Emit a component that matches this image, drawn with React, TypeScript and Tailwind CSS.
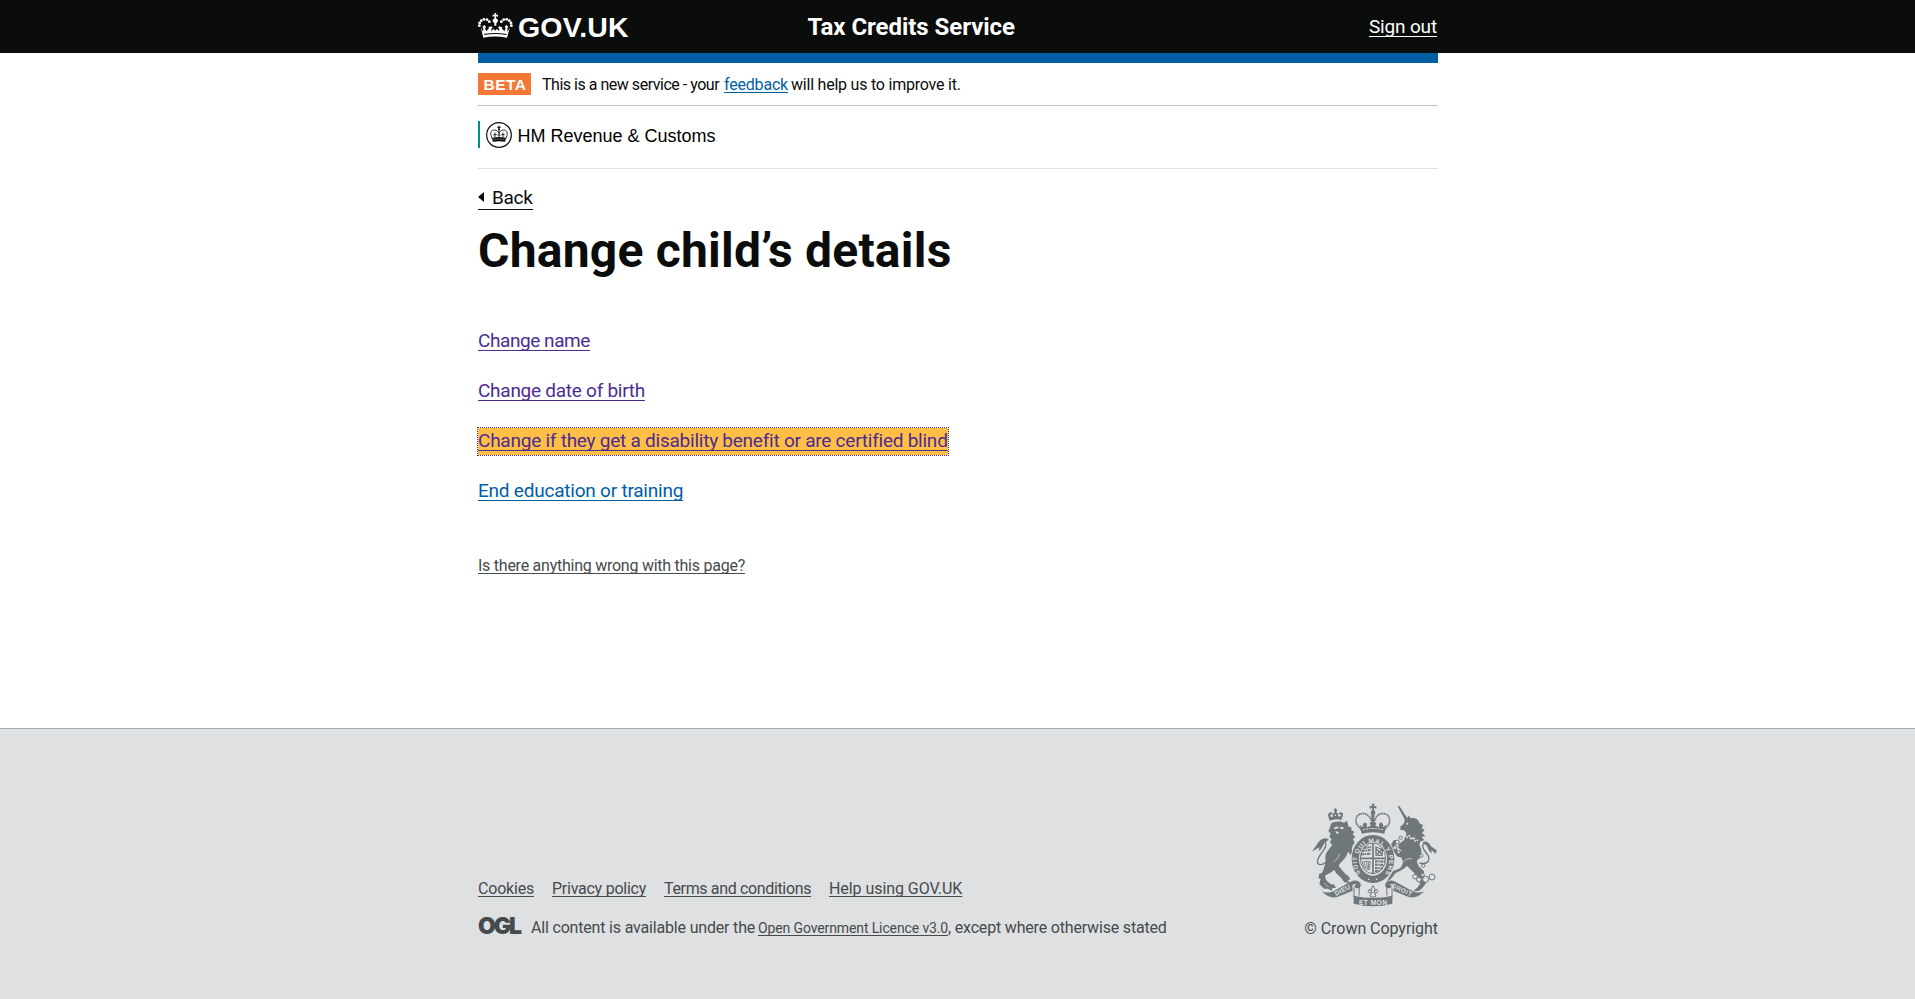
import type { ReactNode } from 'react';

function CrownLogo() {
  const beads: [number, number][] = [
    [28, 76], [29, 68], [34, 61], [42, 57], [51, 58], [58, 64],
    [94, 64], [101, 58], [110, 57], [118, 61], [123, 68], [124, 76],
  ];
  return (
    <svg viewBox="24 38 105 78" className="h-[26px] w-[35px]" fill="#fff" aria-hidden="true">
      {beads.map(([x, y]) => (
        <circle key={`${x}-${y}`} cx={x} cy={y} r="4.3" />
      ))}
      <path d="M73 38h6l-1 6 6-1.500v7l-6-1.500 1 7c4 1 6 4 5 8l-5 6v7h-6v-7l-5-6c-1-4 1-7 5-8l1-7-6 1.500v-7l6 1.500z" />
      <path d="M32 80l7 14 1-10-3-5 6-5 5 5-3 5 4 9 8-9-2-5 6 1 2-4 5 6-4 4 1 9h22l1-9-4-4 5-6 2 4 6-1-2 5 8 9 4-9-3-5 5-5 6 5-3 5 1 10 7-14-9 32c-23-5-49-5-71 0z" />
      <path d="M42 101q34-6 68 0l-1 3q-33-6-66 0z" fill="#0b0c0c" />
      <path d="M64 93l7-8 5 6 5-6 7 8-1 5H65z" />
      <circle cx="68" cy="86" r="2" fill="#0b0c0c" />
      <circle cx="84" cy="86" r="2" fill="#0b0c0c" />
    </svg>
  );
}

function RevenueCrest() {
  return (
    <svg viewBox="48 66 78 78" className="size-[26px]" fill="none" stroke="#0b0c0c" aria-hidden="true">
      <circle cx="87" cy="105" r="37" strokeWidth="3.500" />
      <path d="M67 118l-4-12c-3-11 3-17 11-16 7 0 11 5 13 10M107 118l4-12c3-11-3-17-11-16-7 0-11 5-13 10M87 86v26" strokeWidth="2.500" />
      <path d="M87 77v9M82 82h10" strokeWidth="3" />
      <circle cx="87" cy="88" r="3" fill="#0b0c0c" stroke="none" />
      <path d="M67 113q20-4 40 0l-1 12q-19-3-38 0z" fill="#0b0c0c" stroke="none" />
      <path d="M70 119q17-4 34 0" stroke="#fff" strokeWidth="1.500" strokeDasharray="3 2" />
      <path d="M75 98v14M70 104h10M99 98v14M94 104h10M82 105h10" strokeWidth="2.500" />
    </svg>
  );
}

function RoyalArms() {
  const chain: [number, number, number][] = [
    [325, 156, 6], [335, 143, 5], [318, 173, 6], [329, 186, 5], [397, 197, 5],
    [403, 227, 5], [378, 260, 7], [390, 269, 7], [410, 268, 9], [429, 261, 9], [401, 255, 5],
  ];
  return (
    <svg viewBox="66 39 381 312" className="h-[104px] w-[127px]" fill="#6f777b" stroke="#6f777b" strokeWidth="0" aria-hidden="true">
      <defs>
        <path id="garter" d="M215 250A48 56 0 1 1 289 250" />
      </defs>
      {/* tails */}
      <path d="M115 214C89 234 78 221 91 199C101 182 117 170 109 157C105 150 97 151 91 158" fill="none" strokeWidth="4" />
      <path d="M119 149C107 139 94 147 86 160L69 185L91 172L89 183C99 179 101 166 107 159z" />
      <path d="M391 219C421 226 426 206 412 189C400 175 397 164 407 160C416 157 421 165 421 170" fill="none" strokeWidth="4" />
      <path d="M400 158C411 149 421 158 425 168L443 181L441 192L427 180L428 190C418 184 418 174 412 166z" />
      {/* lion */}
      <path d="M126 101C133 94 154 92 165 98L174 92L178 109L188 113L187 121L196 125L191 134L199 140L192 148L197 159L191 166L188 179L205 192L213 203L203 201L194 195L198 207L190 202L178 185L174 193C168 210 155 214 149 228L159 240L170 253L178 258L184 268L177 271L182 279L166 277L156 263L141 249L136 239C127 248 116 252 108 257L111 270L123 281L136 284L141 294L130 294L129 302L116 296L105 296L91 282L95 267L88 264L91 251L99 249C107 231 111 217 109 200C110 187 120 178 130 165L122 156L128 148L121 140L125 131L118 123L122 115z" />
      <path d="M134 114l12-5 3 5-12 4zM153 111l9 0 3 5-11 1zM139 123l12 4-7 6z" fill="#dee0e2" />
      <path d="M152 190q-5 19-19 25M154 229l13 14M106 279l13 13" fill="none" stroke="#dee0e2" strokeWidth="2" />
      <path d="M122 92L117 76Q119 66 127 67L134 72L137 65L133 60L137 59L137 55H142L142 59L146 60L142 65L147 72L154 67Q163 66 162 75L157 90Q140 84 122 92z" />
      <path d="M139 68v16" stroke="#6f777b" strokeWidth="3" />
      <circle cx="128" cy="77" r="4" fill="#dee0e2" />
      <circle cx="139" cy="76" r="2.500" fill="#dee0e2" />
      <circle cx="151" cy="76" r="4" fill="#dee0e2" />
      {/* imperial crown */}
      <path d="M248 41h9l-3 8 8-2v9l-8-2 2 9h-8l2-9-8 2v-9l8 2z" />
      <circle cx="252" cy="68" r="7" />
      <path d="M217 119L204 104C195 83 208 68 226 71Q242 75 247 93M286 119L299 104C308 83 295 68 277 71Q261 75 257 93" fill="none" strokeWidth="5" strokeDasharray="5 1.500" />
      <path d="M212 104l9 8 1-10 6-5 6 5-1 10 12-5-3-8 5-3v-24h9v24l6 3-3 8 12 5-1-10 6-5 6 5 1 10 9-8-6 27q-34-9-68 0z" />
      <path d="M222 119q30-7 61 0" fill="none" stroke="#dee0e2" strokeWidth="3" strokeDasharray="6 3" />
      {/* unicorn */}
      <path d="M326 49L331 48L357 88L349 92z" />
      <path d="M347 91L356 83L357 76L365 84C383 82 390 91 391 99L402 106L398 115L407 120L399 129L409 138L398 141L406 151L395 154L391 163C397 178 401 187 393 203L383 213L389 229L405 244L404 261L411 280L400 294L390 303L373 304L386 292L393 281L389 261L375 248L364 238L354 227C341 242 326 244 319 250L306 267L293 274L303 258L312 243L334 235L342 219L338 203L324 199L311 181L306 163L315 150L325 150L319 167L327 185L338 182L328 173L329 163L345 150L352 129L345 121L334 120L334 110L344 101z" />
      <circle cx="355" cy="101" r="3" fill="#dee0e2" />
      <path d="M348 134l6 8 7-5 5 11 8-5 5 10 9-3" fill="none" stroke="#dee0e2" strokeWidth="5" strokeDasharray="6 2" />
      <path d="M336 218q14-13 33-13" fill="none" stroke="#dee0e2" strokeWidth="2" />
      {chain.map(([x, y, r]) => (
        <circle key={`${x}-${y}`} cx={x} cy={y} r={r} fill="#dee0e2" strokeWidth="3" />
      ))}
      {/* garter and shield */}
      <ellipse cx="252" cy="207" rx="67" ry="75" fill="#dee0e2" />
      <ellipse cx="252" cy="207" rx="53" ry="61" fill="none" strokeWidth="22" />
      <text fontFamily="'Liberation Sans', sans-serif" fontWeight="700" fontSize="19" fill="#dee0e2">
        <textPath href="#garter" textLength="255">SOIT QUI MAL Y PENSE</textPath>
      </text>
      <ellipse cx="252" cy="205" rx="41" ry="49" fill="#dee0e2" />
      <ellipse cx="252" cy="205" rx="38" ry="46" fill="none" strokeWidth="3" />
      <path d="M252 160v92M213 205h78" fill="none" strokeWidth="5" />
      <path d="M224 174l22-3M218 183l29-3M216 193l30-2" fill="none" strokeWidth="6" strokeDasharray="9 2 5 2" />
      <path d="M258 214l30 1M258 224l27 1M258 234l22 1M258 243l14 0" fill="none" strokeWidth="6.500" strokeDasharray="8 2 4 2" />
      <path d="M261 171l20 8-2 17-18-1zM265 192l16-16M262 178l18 15" fill="none" strokeWidth="4" />
      <path d="M220 216q12-4 24-1l-3 24q-18-2-21-23zM226 217l3 17M233 215l2 21M239 216l-1 20" fill="none" strokeWidth="2.500" />
      <circle cx="239" cy="268" r="2.500" fill="#dee0e2" />
      <circle cx="263" cy="268" r="2.500" fill="#dee0e2" />
      {/* fleur-de-lis */}
      <path d="M252 287l6 10-3 11q2-10 9-9 6 5 0 9l-7 1 4 9-9 4-9-4 4-9-7-1q-6-4 0-9 7-1 9 9l-3-11z" fill="#dee0e2" strokeWidth="3" />
      {/* motto scroll */}
      <path d="M99 304Q117 312 134 303L185 275Q204 267 214 279Q219 292 207 295Q197 295 196 287L202 283Q190 279 190 291L191 302L145 321Q118 327 99 304z" />
      <path d="M405 304Q387 312 370 303L319 275Q300 267 290 279Q285 292 297 295Q307 295 308 287L302 283Q314 279 314 291L313 302L359 321Q386 327 405 304z" />
      <path d="M194 317Q252 330 310 317V341Q252 356 194 341z" />
      <path d="M195 321V292M211 289L210 317M309 321V292M293 289L294 317" fill="none" strokeWidth="3" />
      <g fontFamily="'Liberation Sans', sans-serif" fontWeight="700" fontSize="20" fill="#dee0e2">
        <text x="0" y="0" transform="translate(141 318) rotate(-27)" textLength="50">DIEU</text>
        <text x="210" y="344" textLength="84">ET MON</text>
        <text x="0" y="0" transform="translate(307 292) rotate(25)" fontSize="19" textLength="64">DROIT</text>
      </g>
    </svg>
  );
}

function Link({ className, children }: { className: string; children: ReactNode }) {
  return (
    <a href="#" className={`inline-block whitespace-nowrap underline decoration-1 [text-decoration-skip-ink:none] ${className}`}>
      {children}
    </a>
  );
}

export default function App() {
  return (
    <div className="flex h-screen flex-col overflow-hidden bg-white font-['Roboto',sans-serif] text-[#0b0c0c]">
      <header className="h-[53px] shrink-0 bg-[#0b0c0c] pl-px text-white">
        <div className="mx-auto flex h-full w-[960px] items-start">
          <div className="flex w-[329.5px] items-start">
            <div className="pt-[13px]">
              <CrownLogo />
            </div>
            <span className="ml-[5px] mt-[11px] font-['Liberation_Sans',sans-serif] text-[28.5px]/[33px] font-bold tracking-[0.15px]">GOV.UK</span>
          </div>
          <span className="mt-[13px] whitespace-nowrap text-[24px]/[28px] font-bold tracking-[-0.05px]">Tax Credits Service</span>
          <Link className="ml-auto mr-px mt-[14px] text-[19px]/[25px] tracking-[-0.16px] underline-offset-[3px]">Sign out</Link>
        </div>
      </header>

      <div className="shrink-0 pl-px">
        <main className="mx-auto flex w-[960px] flex-col">
          <div className="h-[10px] bg-[#005ea5]" />
          <div className="flex h-[43px] items-start border-b border-[#bfc1c3] pt-[10px] text-[16px]/[24px]">
            <strong className="flex h-[22px] w-[53px] justify-center bg-[#f47738] pl-px font-['Liberation_Sans',sans-serif] text-[15.5px]/[24px] font-bold tracking-[0.5px] text-white">BETA</strong>
            <span className="ml-[11px] w-[182px] whitespace-nowrap tracking-[-0.48px]">This is a new service - your</span>
            <Link className="h-6 w-[64px] tracking-[-0.19px] text-[#005ea5] underline-offset-[2px]">feedback</Link>
            <span className="ml-[3px] whitespace-nowrap tracking-[-0.22px]">will help us to improve it.</span>
          </div>

          <div className="flex h-[63px] items-start border-b border-[#dee0e2] pt-[15px]">
            <div className="flex h-[27px] items-center border-l-2 border-[#00918b] pl-[6px]">
              <RevenueCrest />
              <span className="ml-[5.5px] whitespace-nowrap pt-[3px] font-['Liberation_Sans',sans-serif] text-[18px]/[27px] text-black">HM Revenue &amp; Customs</span>
            </div>
          </div>

          <a href="#" className="mt-[16px] flex h-[25px] w-[55px] items-center border-b border-[#0b0c0c]">
            <svg viewBox="0 0 6 10" className="h-[10px] w-[6px]" fill="#0b0c0c" aria-hidden="true">
              <path d="M6 0v10L0 5z" />
            </svg>
            <span className="ml-[8px] pt-px text-[19px]/[25px] tracking-[-0.3px]">Back</span>
          </a>

          <h1 className="mt-[16px] whitespace-nowrap text-[48px]/[50px] font-bold tracking-[0.23px]">Change child’s details</h1>

          <ul className="mt-[52px] flex flex-col gap-[25px] text-[19px]/[25px] text-[#4c2c92]">
            <li className="flex h-[25px]">
              <Link className="tracking-[-0.43px] underline-offset-[3px]">Change name</Link>
            </li>
            <li className="flex h-[25px]">
              <Link className="tracking-[-0.26px] underline-offset-[3px]">Change date of birth</Link>
            </li>
            <li className="flex h-[25px]">
              <Link className="h-[27px] bg-[#ffbf47] tracking-[-0.24px] underline-offset-[3px] outline-1 outline-dotted outline-[#4c2c92]">
                Change if they get a disability benefit or are certified blind
              </Link>
            </li>
            <li className="flex h-[25px]">
              <Link className="tracking-[-0.22px] text-[#005ea5] underline-offset-[3px]">End education or training</Link>
            </li>
          </ul>

          <div className="mt-[52px] flex text-[16px]/[22px] text-[#454a4c]">
            <Link className="tracking-[-0.25px] underline-offset-[2px]">Is there anything wrong with this page?</Link>
          </div>
        </main>
      </div>

      <footer className="mt-auto h-[271px] shrink-0 border-t border-[#a1acb2] bg-[#dee0e2] pl-px text-[16px]/[20px] text-[#454a4c]">
        <div className="mx-auto flex w-[960px] justify-between pt-[74px]">
          <div className="pt-[76px]">
            <nav className="flex">
              <Link className="w-[56px] tracking-[-0.2px] underline-offset-[2px]">Cookies</Link>
              <Link className="ml-[18px] w-[94px] tracking-[-0.25px] underline-offset-[2px]">Privacy policy</Link>
              <Link className="ml-[18px] w-[147px] tracking-[-0.35px] underline-offset-[2px]">Terms and conditions</Link>
              <Link className="ml-[18px] tracking-[-0.06px] underline-offset-[2px]">Help using GOV.UK</Link>
            </nav>
            <div className="mt-[19px] flex items-start whitespace-nowrap">
              <span className="w-[43px] font-['Inter',sans-serif] text-[23px]/[17px] font-black tracking-[-2.1px]">OGL</span>
              <span className="ml-[10px] w-[227px] tracking-[-0.18px]">All content is available under the</span>
              <Link className="w-[190px] text-[14px]/[21px] tracking-[-0.12px] underline-offset-[2px]">Open Government Licence v3.0</Link>
              <span className="tracking-[-0.18px]">, except where otherwise stated</span>
            </div>
          </div>
          <div className="flex flex-col items-end">
            <RoyalArms />
            <span className="mt-[12px] whitespace-nowrap tracking-[-0.05px]">© Crown Copyright</span>
          </div>
        </div>
      </footer>
    </div>
  );
}
